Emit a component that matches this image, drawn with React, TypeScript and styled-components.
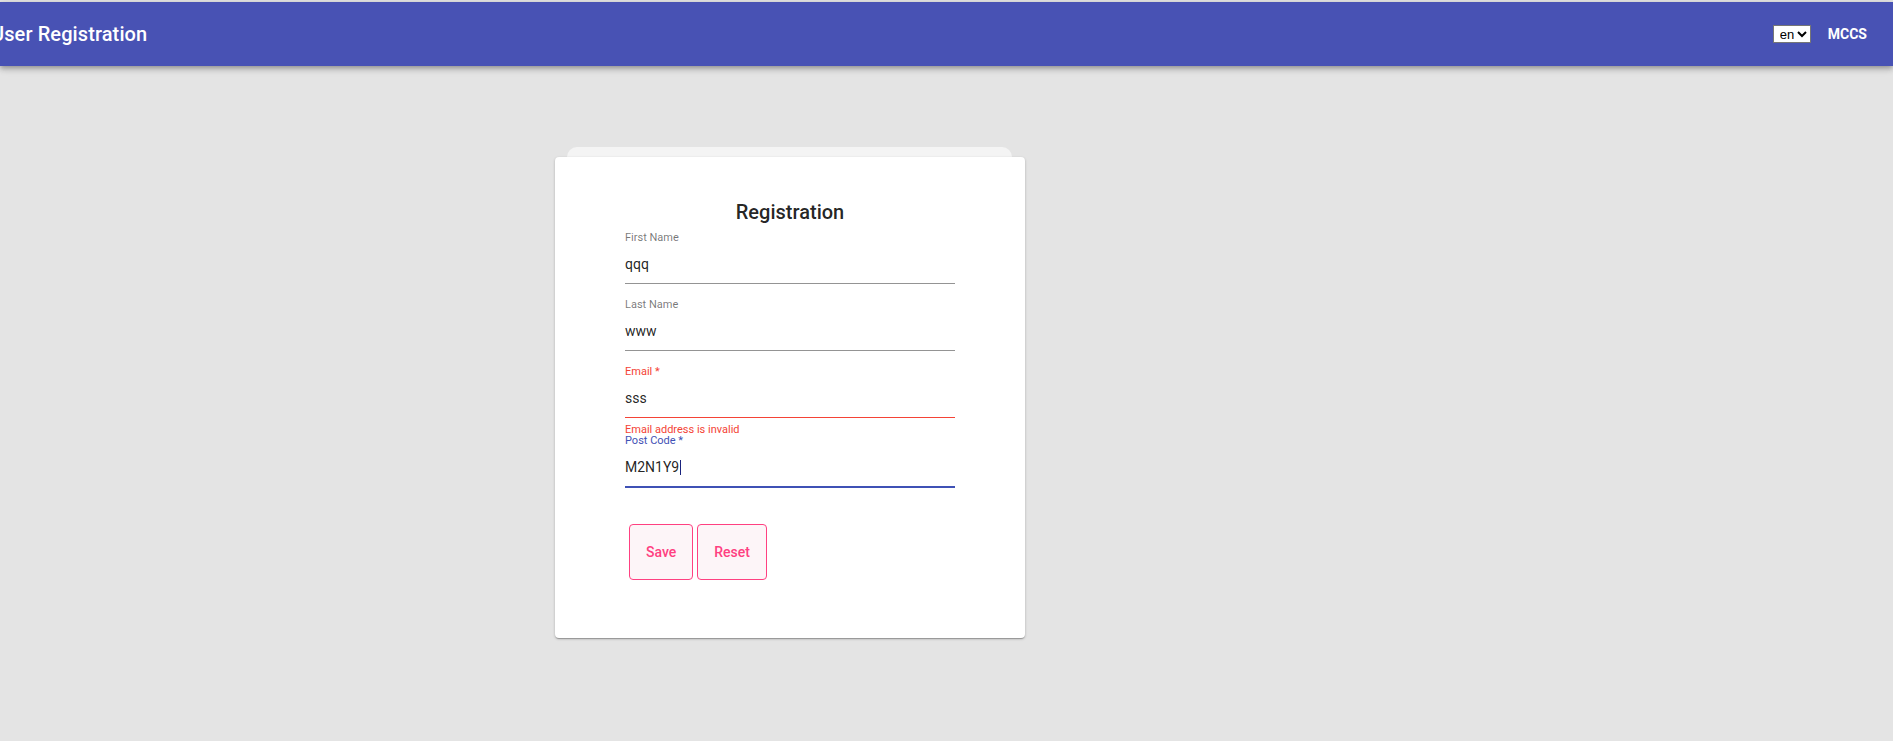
import React from "react";
import styled, { createGlobalStyle, css } from "styled-components";

const Global = createGlobalStyle`
  html, body { margin: 0; padding: 0; }
  body {
    background: #e4e4e4;
    font-family: Roboto, "Noto Sans", Arial, sans-serif;
    overflow: hidden;
  }
`;

const Page = styled.div`
  width: 1893px;
  height: 741px;
  padding-top: 2px;
  box-sizing: border-box;
`;

const AppBar = styled.header`
  height: 64px;
  background: #4852b4;
  box-shadow: 0 2px 4px -1px rgba(0, 0, 0, 0.2), 0 4px 5px 0 rgba(0, 0, 0, 0.14),
    0 1px 10px 0 rgba(0, 0, 0, 0.12);
  display: flex;
  align-items: center;
  padding-right: 26px;
  position: relative;
  z-index: 2;
`;

const AppTitle = styled.h1`
  margin: 0 0 0 -9px;
  font-size: 20px;
  font-weight: 500;
  color: #ffffff;
  letter-spacing: 0.1px;
  flex: 1;
`;

const RightGroup = styled.div`
  display: flex;
  align-items: center;
  gap: 17px;
`;

const LangSelect = styled.select`
  height: 18px;
  width: 38px;
  font-family: Arial, "Liberation Sans", sans-serif;
  font-size: 13px;
  color: #000;
  background: #fff;
  border: 1px solid #767676;
  border-radius: 0;
  padding: 0 0 0 2px;
`;

const Brand = styled.span`
  color: #fff;
  font-size: 14px;
  font-weight: 700;
`;

const Main = styled.main`
  padding: 81px 0 0 555px;
`;

const CardStack = styled.div`
  width: 470px;
  display: flex;
  flex-direction: column;
`;

const BackTab = styled.div`
  height: 20px;
  margin: 0 13px -10px 12px;
  background: #f4f4f4;
  border-radius: 10px 10px 0 0;
`;

const Card = styled.section`
  position: relative;
  z-index: 1;
  background: #fff;
  border-radius: 4px;
  box-shadow: 0 1px 3px 0 rgba(0, 0, 0, 0.2), 0 1px 1px 0 rgba(0, 0, 0, 0.14),
    0 2px 1px -1px rgba(0, 0, 0, 0.12);
  padding: 43px 70px 58px;
  display: flex;
  flex-direction: column;
`;

const CardTitle = styled.h2`
  margin: 0 0 7px;
  font-size: 20px;
  line-height: 24px;
  font-weight: 500;
  text-align: center;
  color: rgba(0, 0, 0, 0.87);
`;

type State = "normal" | "error" | "focused";

const stateColor = (s: State) =>
  s === "error" ? "#f44336" : s === "focused" ? "#3f51b5" : "rgba(0, 0, 0, 0.54)";

const Field = styled.div<{ $gap: number }>`
  display: flex;
  flex-direction: column;
  margin-top: ${(p) => p.$gap}px;
`;

const Label = styled.label<{ $state: State }>`
  font-size: 11px;
  line-height: 14px;
  height: 14px;
  color: ${(p) => stateColor(p.$state)};
`;

const Value = styled.div<{ $state: State }>`
  margin-top: 7px;
  height: 24px;
  line-height: 24px;
  padding-bottom: 7px;
  font-size: 14px;
  color: rgba(0, 0, 0, 0.87);
  display: flex;
  align-items: center;
  ${(p) =>
    p.$state === "focused"
      ? css`
          border-bottom: 2px solid #3f51b5;
        `
      : p.$state === "error"
      ? css`
          border-bottom: 1px solid #f44336;
        `
      : css`
          border-bottom: 1px solid #949494;
        `}
`;

const Caret = styled.span`
  display: inline-block;
  width: 1px;
  height: 15px;
  margin-left: 1px;
  background: #1a237e;
`;

const ErrorText = styled.div`
  margin-top: 6px;
  font-size: 11px;
  line-height: 12px;
  color: #f44336;
`;

const Actions = styled.div`
  display: flex;
  gap: 4px;
  margin: 36px 0 0 4px;
`;

const Button = styled.button`
  height: 56px;
  padding: 0 16px;
  border: 1px solid #ff4081;
  border-radius: 4px;
  background: #fdf5f8;
  color: #ff4081;
  font-family: Roboto, Arial, sans-serif;
  font-size: 14px;
  font-weight: 500;
  cursor: pointer;
`;

const fields: { label: string; value: string; state: State; error?: string; caret?: boolean; gap: number }[] = [
  { label: "First Name", value: "qqq", state: "normal", gap: 0 },
  { label: "Last Name", value: "www", state: "normal", gap: 14 },
  { label: "Email *", value: "sss", state: "error", error: "Email address is invalid", gap: 14 },
  { label: "Post Code *", value: "M2N1Y9", state: "focused", caret: true, gap: -2 },
];

export default function App() {
  return (
    <Page>
      <Global />
      <AppBar>
        <AppTitle>User Registration</AppTitle>
        <RightGroup>
          <LangSelect defaultValue="en">
            <option value="en">en</option>
            <option value="fr">fr</option>
          </LangSelect>
          <Brand>MCCS</Brand>
        </RightGroup>
      </AppBar>
      <Main>
        <CardStack>
          <BackTab />
          <Card>
            <CardTitle>Registration</CardTitle>
            {fields.map((f) => (
              <Field key={f.label} $gap={f.gap}>
                <Label $state={f.state}>{f.label}</Label>
                <Value $state={f.state}>
                  {f.value}
                  {f.caret && <Caret />}
                </Value>
                {f.error && <ErrorText>{f.error}</ErrorText>}
              </Field>
            ))}
            <Actions>
              <Button>Save</Button>
              <Button>Reset</Button>
            </Actions>
          </Card>
        </CardStack>
      </Main>
    </Page>
  );
}
